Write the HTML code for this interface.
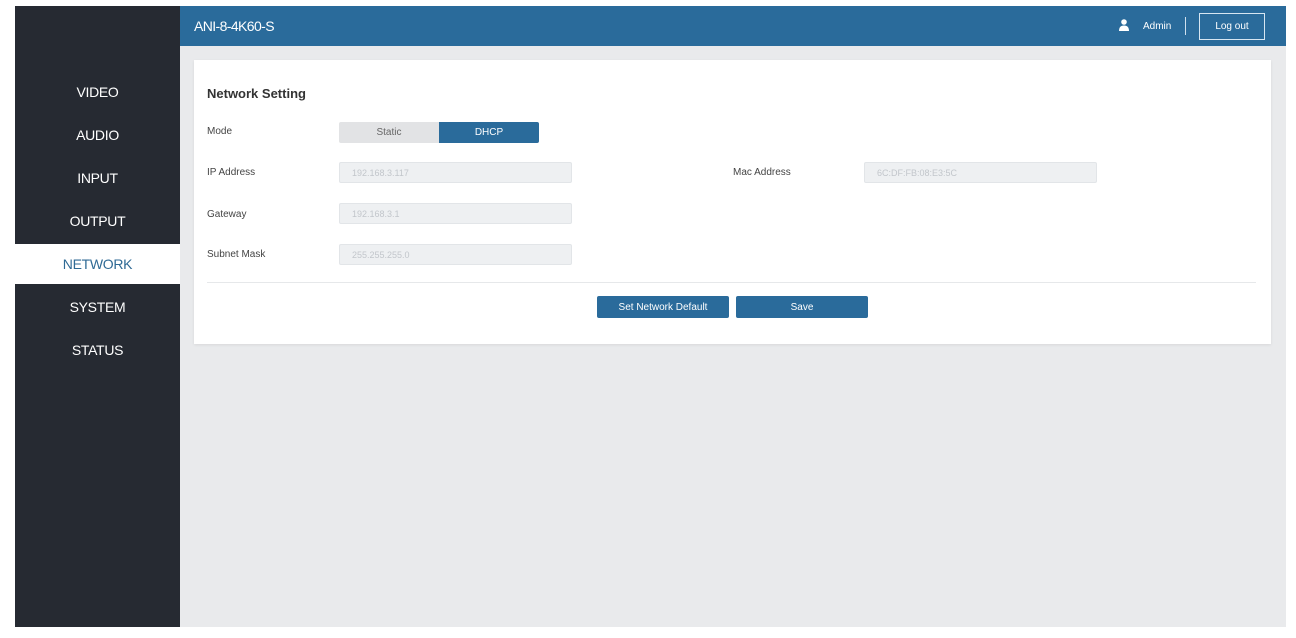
<!DOCTYPE html>
<html><head><meta charset="utf-8"><style>
*{margin:0;padding:0;box-sizing:border-box}
body{width:1296px;height:638px;background:#fff;position:relative;font-family:"Liberation Sans",sans-serif;overflow:hidden}
.a{position:absolute}
.side{left:15px;top:6px;width:165px;height:621px;background:#262a32}
.nav{position:absolute;left:15px;width:165px;text-align:center;color:#fff;font-size:14px;letter-spacing:-0.3px}
.hdr{left:180px;top:6px;width:1106px;height:40px;background:#2a6b9b}
.main{left:180px;top:46px;width:1106px;height:581px;background:#e9eaec}
.card{left:194px;top:60px;width:1077px;height:284px;background:#fff;box-shadow:0 1px 3px rgba(0,0,0,.08)}
.lbl{position:absolute;font-size:10px;color:#444}
.inp{position:absolute;height:21px;background:#eef0f2;border:1px solid #e2e5e8;border-radius:2px;font-size:9px;color:#c2c6cb;padding:5px 12px}
.btn{position:absolute;height:22px;background:#2a6b9b;color:#fff;font-size:10px;text-align:center;line-height:23px;border-radius:2px}
</style></head><body>
<div class="a side"></div>
<div class="a hdr"></div>
<div class="a main"></div>
<div class="a" style="left:194px;top:18px;color:#fff;font-size:14px;letter-spacing:-0.6px">ANI-8-4K60-S</div>
<svg class="a" style="left:1119px;top:19px" width="10" height="12" viewBox="0 0 10 12"><circle cx="5" cy="3" r="2.8" fill="#fff"/><path d="M0 12 Q0 6.5 5 6.5 Q10 6.5 10 12Z" fill="#fff"/></svg>
<div class="a" style="left:1143px;top:21px;color:#fff;font-size:10px">Admin</div>
<div class="a" style="left:1185px;top:17px;width:1px;height:18px;background:#cfe0ee"></div>
<div class="a" style="left:1199px;top:13px;width:66px;height:27px;border:1px solid #d6e6f2;color:#fff;font-size:10px;text-align:center;line-height:25px">Log out</div>

<div class="nav" style="top:84px">VIDEO</div>
<div class="nav" style="top:127px">AUDIO</div>
<div class="nav" style="top:170px">INPUT</div>
<div class="nav" style="top:213px">OUTPUT</div>
<div class="a" style="left:15px;top:244px;width:165px;height:40px;background:#fff"></div>
<div class="nav" style="top:256px;color:#2f6a95">NETWORK</div>
<div class="nav" style="top:299px">SYSTEM</div>
<div class="nav" style="top:342px">STATUS</div>

<div class="a card"></div>
<div class="a" style="left:207px;top:86px;font-size:13px;font-weight:bold;color:#333">Network Setting</div>
<div class="lbl" style="left:207px;top:126px">Mode</div>
<div class="a" style="left:339px;top:122px;width:100px;height:21px;background:#e2e3e5;border-radius:2px 0 0 2px;font-size:10px;color:#666;text-align:center;line-height:21px">Static</div>
<div class="a" style="left:439px;top:122px;width:100px;height:21px;background:#2a6b9b;border-radius:0 2px 2px 0;font-size:10px;color:#fff;text-align:center;line-height:21px">DHCP</div>

<div class="lbl" style="left:207px;top:167px">IP Address</div>
<div class="inp" style="left:339px;top:162px;width:233px">192.168.3.117</div>
<div class="lbl" style="left:733px;top:167px">Mac Address</div>
<div class="inp" style="left:864px;top:162px;width:233px">6C:DF:FB:08:E3:5C</div>
<div class="lbl" style="left:207px;top:209px">Gateway</div>
<div class="inp" style="left:339px;top:203px;width:233px">192.168.3.1</div>
<div class="lbl" style="left:207px;top:249px">Subnet Mask</div>
<div class="inp" style="left:339px;top:244px;width:233px">255.255.255.0</div>

<div class="a" style="left:207px;top:282px;width:1049px;height:1px;background:#e6e8ea"></div>
<div class="btn" style="left:597px;top:296px;width:132px">Set Network Default</div>
<div class="btn" style="left:736px;top:296px;width:132px">Save</div>
</body></html>
